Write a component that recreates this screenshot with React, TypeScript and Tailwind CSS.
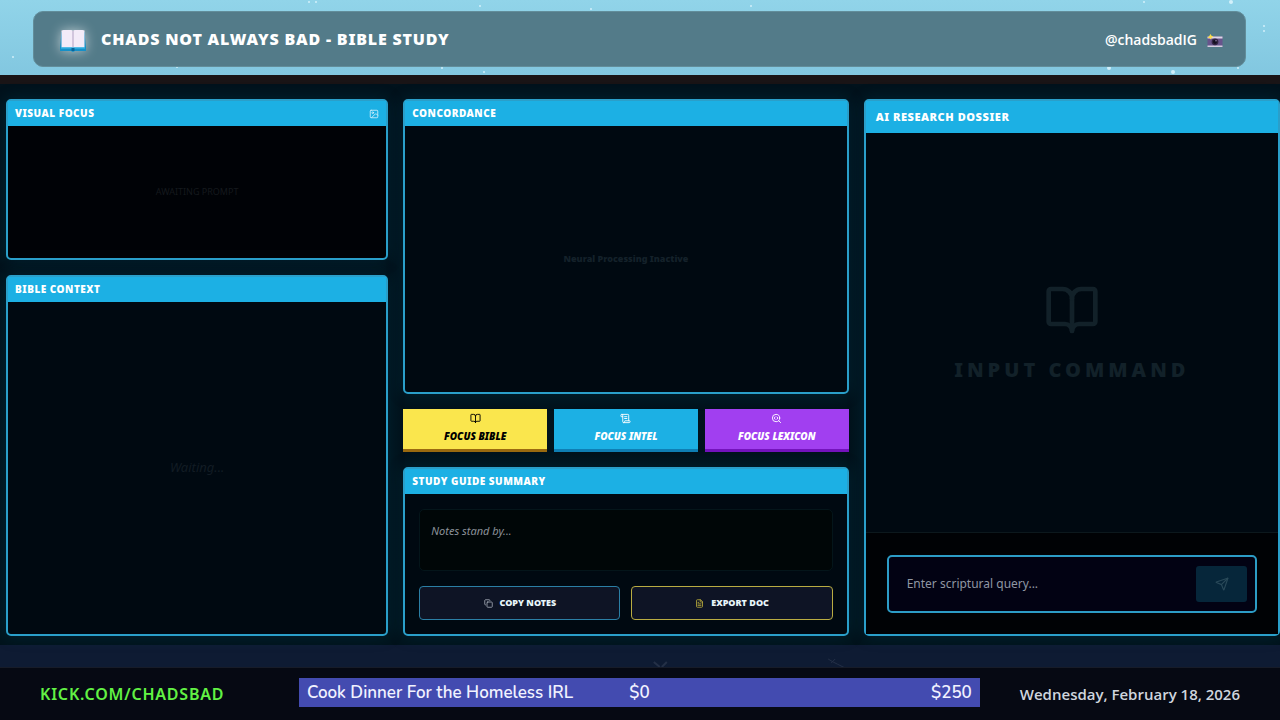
import type { ReactNode } from "react";
import {
  BookOpen, Copy, FileText, Image, ScrollText, SearchCode, Send,
} from "lucide-react";
import clsx from "clsx";

const STARS = [
  [309, 2, 1], [316, 2, 1], [13, 57, 1], [177, 67, 1], [442, 68, 1], [480, 6, 1],
  [591, 9, 1], [484, 72, 1], [751, 6, 1], [1109, 68, 2], [1173, 72, 2], [1238, 68, 1],
  [1231, 2, 2], [1264, 26, 1], [1264, 31, 1], [1144, 2, 1],
];

const FOCUS = [
  { label: "Focus Bible", icon: BookOpen, style: "bg-[#fae64d] border-[#9a6a10] text-black" },
  { label: "Focus Intel", icon: ScrollText, style: "bg-[#1cb0e4] border-[#0f7fb4] text-white" },
  { label: "Focus Lexicon", icon: SearchCode, style: "bg-[#a13ff0] border-[#7413bd] text-white" },
];

function BookEmoji() {
  return (
    <svg width="28" height="24" viewBox="0 0 28 24" className="mt-1 drop-shadow-[0_0_6px_rgba(255,255,255,0.6)]" aria-hidden="true">
      <path d="M1 18.500 2.500 3h23L27 18.500V22H16l-2 1-2-1H1z" fill="#1590c8" />
      <path d="M2.500 1.500q1-.5 2-.5h7.500q1.500 0 2 1 .5-1 2-1h7.500q1 0 2 .5V18.500h-23z" fill="#f3ebf8" />
      <path d="M14 2v16.500" stroke="#c3b7d2" strokeWidth="1.400" />
      <path d="M2 19h24" stroke="#38b8e8" strokeWidth="1.200" />
      <path d="M12.500 19h3v3h-3z" fill="#0a6598" />
    </svg>
  );
}

function CameraEmoji() {
  return (
    <svg width="16" height="14" viewBox="0 0 16 14" className="mt-[3px]" aria-hidden="true">
      <path d="M.5 2.500h15V13H.5z" fill="#68548c" />
      <path d="M.5 2.500h15v2H.5z" fill="#dcd6e6" />
      <path d="M.5 11.500h15V13H.5z" fill="#d5cee0" />
      <path d="m3.500 0 1 1.800 2 .6-1.800 1.200L4 5.500 2.500 4 .5 4l1.500-1.500z" fill="#fbdc4a" />
      <circle cx="8" cy="7.800" r="3.400" fill="#332544" />
      <circle cx="8" cy="7.800" r="2.100" fill="#141020" />
      <circle cx="9" cy="6.800" r=".7" fill="#a695c5" />
    </svg>
  );
}

type PanelProps = {
  title: string;
  className?: string;
  headerClass?: string;
  icon?: ReactNode;
  children: ReactNode;
};

function Panel({ title, className, headerClass = "h-[25px] px-[7px] text-[10px]", icon, children }: PanelProps) {
  return (
    <section className={clsx("flex flex-col rounded-[5px] border-2 border-[#2a9fca] shadow-[0_0_16px_rgba(0,90,120,0.25)]", className)}>
      <div className={clsx("flex shrink-0 items-center justify-between bg-[#1cb0e4] text-white", headerClass)}>
        <h2 className="font-black uppercase tracking-wider">{title}</h2>
        {icon}
      </div>
      {children}
    </section>
  );
}

export default function App() {
  return (
    <div className="flex min-h-screen flex-col bg-[#0e1b33] font-['Noto_Sans','Open_Sans',sans-serif]">
      {/* Header */}
      <header className="relative bg-linear-to-b from-[#91d4e9] to-[#82c7e0] pt-[11px] pr-[34px] pb-2 pl-[33px]">
        <svg className="absolute inset-0 h-full w-full" aria-hidden="true">
          {STARS.map(([x, y, r]) => (
            <circle key={`${x}-${y}`} cx={`${x / 12.8}%`} cy={y} r={r} fill="#e4f8ff" opacity="0.8" />
          ))}
        </svg>
        <div className="relative flex h-14 items-center justify-between rounded-[10px] border border-[#628d9a] bg-[#537b89] pr-[22px] pl-[25px] text-white">
          <div className="flex items-center gap-[14px]">
            <BookEmoji />
            <h1 className="text-[16px] font-black tracking-wider">CHADS NOT ALWAYS BAD - BIBLE STUDY</h1>
          </div>
          <div className="flex items-center gap-[10px]">
            <a href="#instagram" className="font-['Open_Sans',sans-serif] text-[14px] font-semibold">@chadsbadIG</a>
            <CameraEmoji />
          </div>
        </div>
      </header>
      <div className="h-[9px] bg-[#191416]" />

      {/* Panels */}
      <main className="grid flex-1 grid-cols-[382fr_445fr_416fr] gap-[15px] bg-linear-to-b from-[#01121c] to-[#01131c] pt-[15px] pb-[9px] pl-[6px]">
        <div className="flex flex-col gap-[15px]">
          <Panel
            title="Visual Focus"
            className="bg-[#000206]"
            icon={<Image size={10} className="text-[#d5f1fb]" />}
          >
            <div className="flex h-[132px] items-center justify-center text-[9px] text-[#15191d]">AWAITING PROMPT</div>
          </Panel>
          <Panel title="Bible Context" className="flex-1 bg-[#000911]">
            <div className="flex flex-1 items-center justify-center text-[13px] italic text-[#121c24]">Waiting...</div>
          </Panel>
        </div>

        <div className="flex flex-col gap-[15px]">
          <Panel title="Concordance" className="flex-1 bg-[#000911]">
            <div className="flex flex-1 items-center justify-center text-[9px] font-black text-[#14212a]">
              Neural Processing Inactive
            </div>
          </Panel>

          <div className="grid grid-cols-3 gap-[7px]">
            {FOCUS.map(({ label, icon: Icon, style }) => (
              <button
                key={label}
                className={clsx("flex h-[43px] flex-col items-center gap-[5px] border-b-[3px] pt-1 text-[10px] font-black uppercase italic", style)}
              >
                <Icon size={11} className="shrink-0" />
                {label}
              </button>
            ))}
          </div>

          <Panel title="Study Guide Summary" className="bg-[#000911]">
            <div className="flex flex-col gap-[15px] px-[14px] pt-[15px] pb-[14px]">
              <textarea
                aria-label="Study notes"
                placeholder="Notes stand by..."
                className="block h-[62px] w-full resize-none rounded-[5px] border border-[#04151a] bg-[#000607] px-[11px] py-3 text-[11px] italic leading-[18px] text-[#8b9199] placeholder:text-[#8b9199]"
              />
              <div className="grid grid-cols-2 gap-[11px]">
                <button className="flex h-[34px] items-center justify-center gap-[7px] rounded-[4px] border border-[#2b7fa5] bg-[#0e1425] text-[9px] font-black text-[#e8f6fb]">
                  <Copy size={9} className="text-[#b3bac4]" />
                  COPY NOTES
                </button>
                <button className="flex h-[34px] items-center justify-center gap-[7px] rounded-[4px] border border-[#b9ac42] bg-[#0e1425] text-[9px] font-black text-[#e8f6fb]">
                  <FileText size={9} className="text-[#c9b93e]" />
                  EXPORT DOC
                </button>
              </div>
            </div>
          </Panel>
        </div>

        <Panel title="AI Research Dossier" className="bg-[#000911]" headerClass="h-8 px-[10px] text-[11px]">
          <div className="flex flex-1 flex-col items-center justify-center gap-[18px] text-[#122129]">
            <BookOpen size={56} />
            <p className="text-[20px] font-black leading-7 tracking-[0.2em]">INPUT COMMAND</p>
          </div>
          <form className="border-t border-[#0c181d] bg-[#000205] px-[21px] pt-[22px] pb-[21px]" onSubmit={(e) => e.preventDefault()}>
            <div className="flex h-[58px] items-center rounded-[5px] border-2 border-[#2c9cc6] bg-[#020213] pr-2 pl-[18px]">
              <input
                aria-label="Scriptural query"
                placeholder="Enter scriptural query..."
                className="min-w-0 flex-1 bg-transparent text-[12px] text-[#9096a3] outline-none placeholder:text-[#9096a3]"
              />
              <button aria-label="Send" className="flex h-9 w-[51px] items-center justify-center rounded-[3px] bg-[#06263a] text-[#294959]">
                <Send size={14} />
              </button>
            </div>
          </form>
        </Panel>
      </main>

      {/* Footer */}
      <div className="h-[22px] overflow-hidden">
        <svg width="100%" height="22" className="text-[#243047]" fill="none" stroke="currentColor" aria-hidden="true">
          <svg x="51%" y="0" overflow="visible"><path d="m1 17 6 5M14 17l-5 5" strokeWidth="2" /></svg>
          <svg x="64.700%" y="0" overflow="visible"><path d="m0 14 5 3 4 2 8 4M3 18l4-4" /></svg>
        </svg>
      </div>
      <footer className="flex h-[53px] items-center border-t border-[#171c29] bg-[#060913] px-10">
        <div className="w-[259px] shrink-0">
          <a href="#kick" className="text-[16px] font-semibold tracking-wider text-[#62f244]">KICK.COM/CHADSBAD</a>
        </div>
        <div className="mb-[3px] grid h-[29px] flex-1 grid-cols-[1fr_auto_1fr] items-center bg-[#434bb0] px-2 font-['Nunito','Noto_Sans',sans-serif] text-[17px] text-[#f1f2ff]">
          <span className="whitespace-nowrap font-semibold">Cook Dinner For the Homeless IRL</span>
          <span className="font-semibold">$0</span>
          <span className="text-right font-semibold">$250</span>
        </div>
        <time dateTime="2026-02-18" className="ml-10 font-['Open_Sans',sans-serif] text-[15px] font-semibold text-[#cfd5de]">Wednesday, February 18, 2026</time>
      </footer>
    </div>
  );
}
